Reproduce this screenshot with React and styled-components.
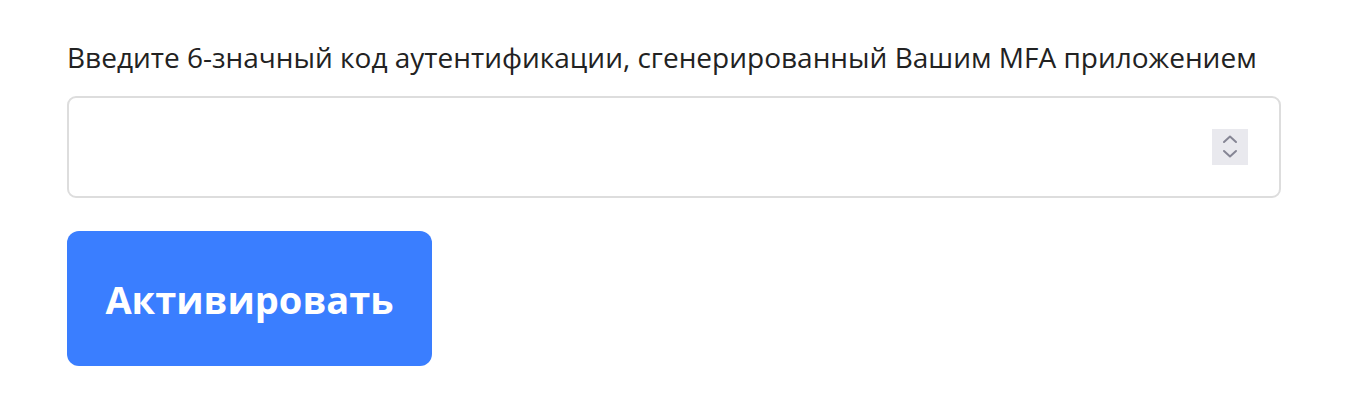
import React from "react";
import styled, { createGlobalStyle } from "styled-components";

const GlobalStyle = createGlobalStyle`
    body {
        margin: 0;
        background: #ffffff;
        font-family: "Open Sans", "Noto Sans", sans-serif;
    }
`;

const Page = styled.div`
    padding: 38px 75px 0 67px;
    width: 1214px;
`;

const Label = styled.label`
    display: block;
    font-size: 28px;
    line-height: 38px;
    color: #222222;
    margin-bottom: 20px;
    white-space: nowrap;
`;

const Field = styled.div`
    display: flex;
    align-items: center;
    height: 98px;
    border: 2px solid #dddddd;
    border-radius: 9px;
    padding: 0 31px 0 20px;
`;

const Input = styled.input`
    flex: 1;
    border: none;
    outline: none;
    font-family: inherit;
    font-size: 28px;
    color: #222222;
    background: transparent;
`;

const Spinner = styled.div`
    width: 36px;
    height: 36px;
    background: #e9e9ee;
`;

const Button = styled.button`
    margin-top: 33px;
    width: 365px;
    height: 135px;
    border: none;
    border-radius: 12px;
    background: #3a7eff;
    color: #ffffff;
    font-family: "Open Sans", "Noto Sans", sans-serif;
    font-weight: 700;
    font-size: 38px;
    cursor: pointer;
`;

function App() {
    return (
        <>
        <GlobalStyle />
        <Page>
            <Label htmlFor="mfa">Введите 6-значный код аутентификации, сгенерированный Вашим MFA приложением</Label>
            <Field>
                <Input id="mfa" inputMode="numeric" />
                <Spinner>
                    <svg width="36" height="36" viewBox="0 0 36 36" fill="none" stroke="#858594" strokeWidth="2" strokeLinecap="round" strokeLinejoin="round">
                        <polyline points="12,13 18,7.5 24,13" />
                        <polyline points="12,22 18,27.5 24,22" />
                    </svg>
                </Spinner>
            </Field>
            <Button>Активировать</Button>
        </Page>
        </>
    );
}

export default App;
